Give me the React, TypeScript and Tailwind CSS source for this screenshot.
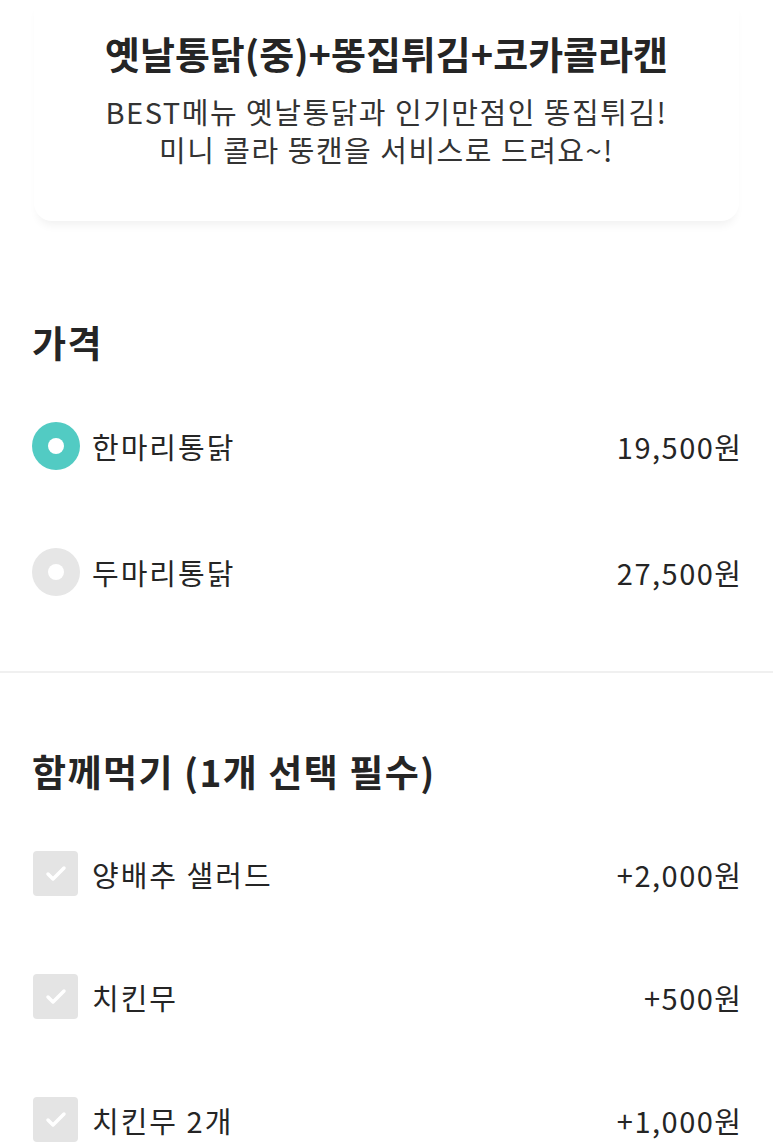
import { Check } from "lucide-react";

const prices = [
  { label: "한마리통닭", price: "19,500원", selected: true },
  { label: "두마리통닭", price: "27,500원", selected: false },
];

const sides = [
  { label: "양배추 샐러드", price: "+2,000원" },
  { label: "치킨무", price: "+500원" },
  { label: "치킨무 2개", price: "+1,000원" },
];

const font = "font-['Noto_Sans_CJK_KR','Noto_Sans',sans-serif]";

export default function App() {
  return (
    <div className={`${font} bg-white text-[#252525] min-h-[1142px] overflow-hidden`}>
      {/* header card */}
      <div className="mx-[34px] pt-[30px] pb-[53px] rounded-b-[18px] bg-white shadow-[0_8px_10px_-4px_rgba(0,0,0,0.06)] text-center">
        <h1 className="text-[38px] leading-[46px] font-bold whitespace-nowrap -mx-[34px]">
          옛날통닭(중)+똥집튀김+코카콜라캔
        </h1>
        <p className="mt-[16px] text-[29px] leading-[38px] tracking-[1.5px] text-[#333] whitespace-nowrap -mx-[34px]">
          BEST메뉴 옛날통닭과 인기만점인 똥집튀김!
          <br />
          미니 콜라 뚱캔을 서비스로 드려요~!
        </p>
      </div>

      {/* price section */}
      <section className="px-[32px] pt-[99px] pb-[36px]">
        <h2 className="text-[37px] leading-[44px] font-bold tracking-[1.5px]">가격</h2>
        <div className="mt-[19px]">
          {prices.map((p) => (
            <div key={p.label} className="h-[126px] flex items-center justify-between">
              <div className="flex items-center gap-[12px]">
                <span
                  className={`w-[48px] h-[48px] rounded-full flex items-center justify-center ${
                    p.selected ? "bg-[#52cbc3]" : "bg-[#e6e6e6]"
                  }`}
                >
                  <span className="w-[16px] h-[16px] rounded-full bg-white" />
                </span>
                <span className="text-[29px] leading-[36px] tracking-[2px]">{p.label}</span>
              </div>
              <span className="text-[29px] leading-[36px] tracking-[1.5px] -mr-[1.5px]">{p.price}</span>
            </div>
          ))}
        </div>
      </section>

      <div className="h-[2px] bg-[#f0f0f0]" />

      {/* side section */}
      <section className="px-[32px] pt-[76px]">
        <h2 className="text-[37px] leading-[44px] font-bold tracking-[1.5px]">함께먹기 (1개 선택 필수)</h2>
        <div className="mt-[19px]">
          {sides.map((s) => (
            <div key={s.label} className="h-[123px] flex items-center justify-between">
              <div className="flex items-center gap-[14px]">
                <span className="ml-[1px] w-[45px] h-[45px] rounded-[4px] bg-[#e4e4e4] flex items-center justify-center">
                  <Check className="w-[24px] h-[24px] text-white" strokeWidth={3.5} />
                </span>
                <span className="text-[29px] leading-[36px] tracking-[2px]">{s.label}</span>
              </div>
              <span className="text-[29px] leading-[36px] tracking-[1.5px] -mr-[1.5px]">{s.price}</span>
            </div>
          ))}
        </div>
      </section>
    </div>
  );
}
